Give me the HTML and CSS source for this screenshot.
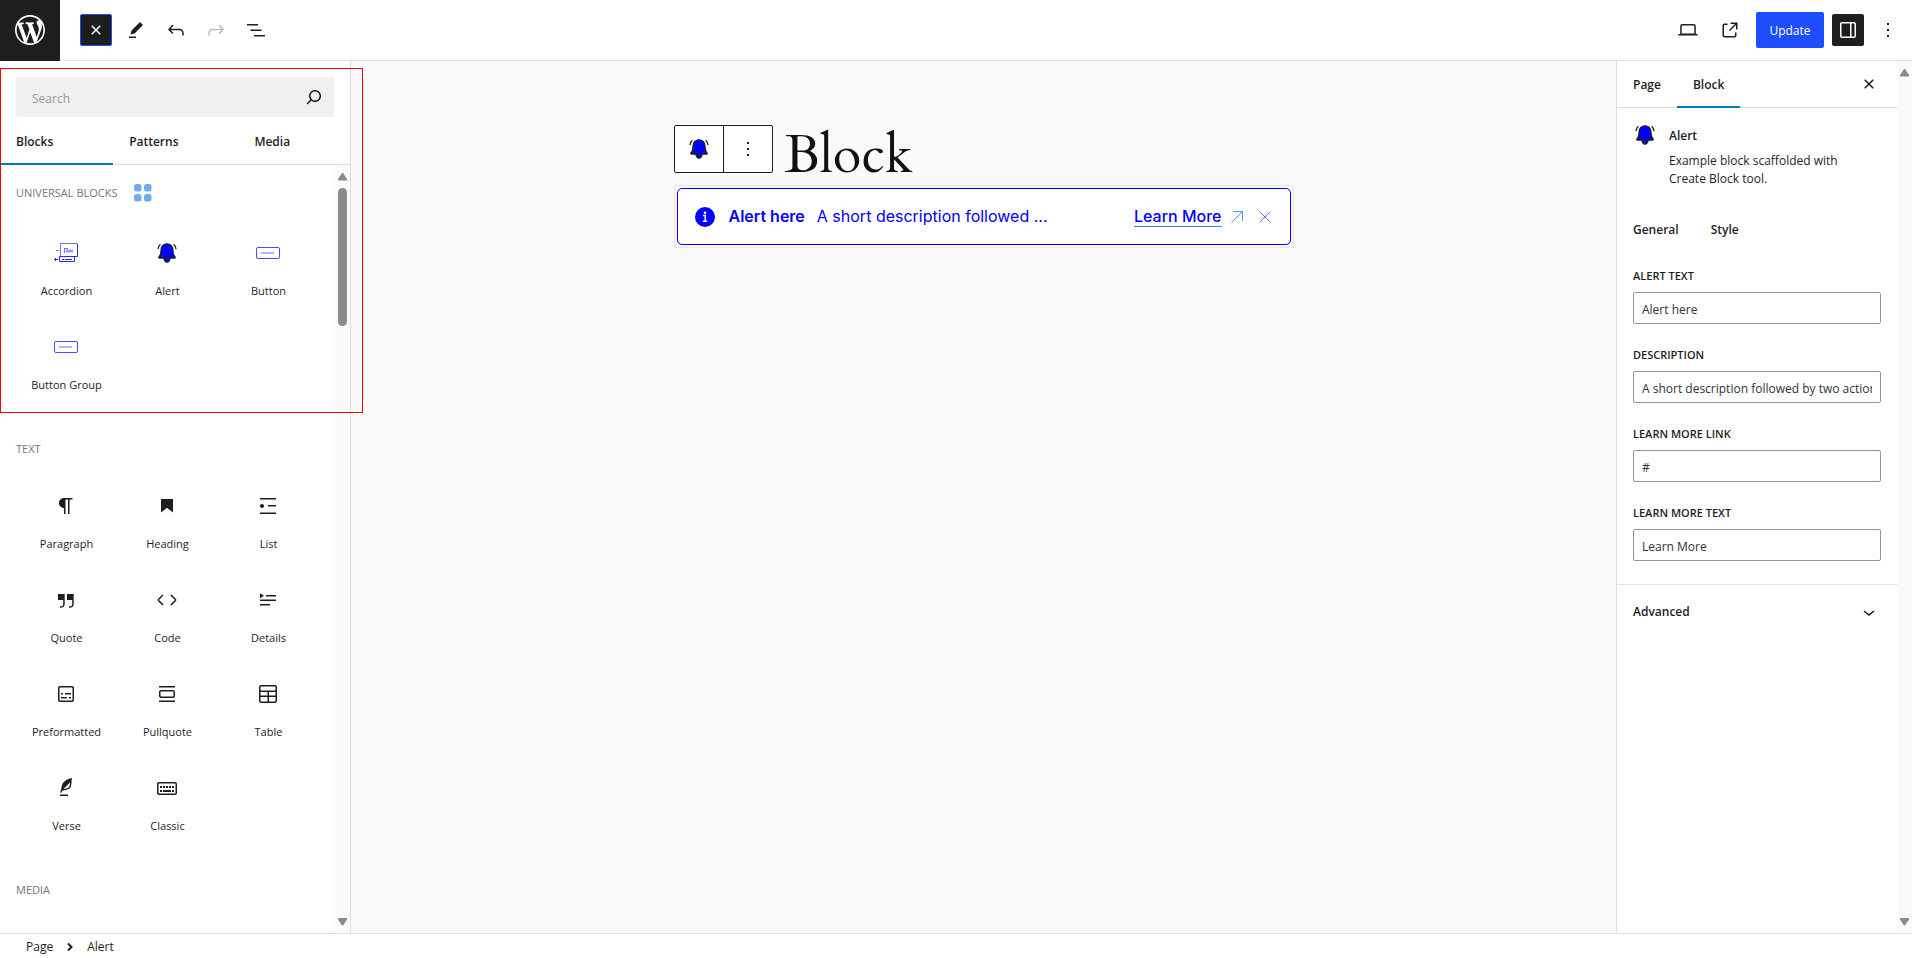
FILE: index.html
```html
<!DOCTYPE html>
<html lang="en">
<head>
<meta charset="utf-8">
<title>Edit Page</title>
<link rel="stylesheet" href="styles.css">
</head>
<body>
<svg class="sprite" aria-hidden="true">
  <symbol id="bell" viewBox="0 0 24 24">
    <path d="M12 2.800c-3.300 0-5.800 2.300-5.900 5.700-.1 3.600-.4 5.700-2 7.200-.4.500-.5 1.300.1 1.300h15.600c.6 0 .5-.8.1-1.300-1.600-1.500-1.900-3.600-2-7.200-.1-3.400-2.600-5.700-5.900-5.700z" fill="#0000ff" stroke="#1e1e1e" stroke-width="1.300"/>
    <path d="M9 17.300c.2 2.400 1.300 3.900 3 3.900s2.800-1.500 3-3.900z" fill="#0000ff" stroke="#1e1e1e" stroke-width="1.300"/>
    <path d="M5.400 3.300C4.200 4.300 3.300 6 3 8M18.600 3.300c1.200 1 2.100 2.700 2.400 4.700" fill="none" stroke="#1e1e1e" stroke-width="1.300"/>
  </symbol>
  <symbol id="close" viewBox="0 0 24 24"><path d="M12 13.060l3.712 3.713 1.061-1.060L13.061 12l3.712-3.712-1.060-1.060L12 10.938 8.288 7.227l-1.061 1.060L10.939 12l-3.712 3.712 1.060 1.061L12 13.061z"/></symbol>
  <symbol id="more" viewBox="0 0 24 24"><path d="M13 19h-2v-2h2v2zm0-6h-2v-2h2v2zm0-6h-2V5h2v2z"/></symbol>
  <symbol id="button-block" viewBox="0 0 24 24"><rect x="0.500" y="6.500" width="23" height="11" rx="1.500" fill="none" stroke="#4a4aff"/><path d="M5 12h13" stroke="#6a6aff"/></symbol>
</svg>

<header class="topbar">
  <a class="site-logo" href="#" aria-label="View pages"><svg viewBox="-2 -2 24 24"><path d="M20 10c0-5.510-4.490-10-10-10C4.480 0 0 4.490 0 10c0 5.520 4.480 10 10 10 5.510 0 10-4.480 10-10zM7.780 15.370L4.370 6.220c.55-.02 1.170-.08 1.170-.08.5-.06.44-1.130-.06-1.110 0 0-1.450.11-2.370.11-.18 0-.37 0-.58-.01C4.120 2.690 6.870 1.110 10 1.110c2.330 0 4.450.87 6.050 2.340-.68-.11-1.650.39-1.650 1.580 0 .74.45 1.360.9 2.100.35.61.55 1.360.55 2.460 0 1.490-1.400 5-1.400 5l-3.030-8.370c.54-.02.82-.17.82-.17.5-.05.44-1.250-.06-1.220 0 0-1.440.12-2.380.12-.87 0-2.330-.12-2.330-.12-.5-.03-.56 1.200-.06 1.220l.92.08 1.260 3.410zM17.410 10c.24-.64.74-1.870.43-4.250.7 1.290 1.050 2.710 1.050 4.250 0 3.290-1.730 6.240-4.400 7.780.97-2.590 1.940-5.200 2.920-7.780zM6.100 18.090C3.120 16.650 1.110 13.530 1.110 10c0-1.300.23-2.480.72-3.590C3.250 10.300 4.670 14.200 6.100 18.090zm4.030-6.630l2.580 6.980c-.86.29-1.760.45-2.710.45-.79 0-1.570-.11-2.290-.33.81-2.380 1.620-4.740 2.420-7.100z"/></svg></a>
  <div class="tools">
    <button class="icon-btn icon-btn--dark icon-btn--focus" aria-label="Close inserter"><svg><use href="#close"/></svg></button>
    <button class="icon-btn" aria-label="Tools"><svg viewBox="0 0 24 24"><path d="m19 7-3-3-8.500 8.500-1 4 4-1L19 7Zm-7 11.500H5V20h7v-1.500Z"/></svg></button>
    <button class="icon-btn" aria-label="Undo"><svg viewBox="0 0 24 24"><path d="M18.300 11.700c-.6-.6-1.400-.9-2.300-.9H6.700l2.900-3.300-1.100-1-4.500 5L8.500 16l1-1-2.700-2.700H16c.5 0 .9.2 1.300.5 1 1 1 3.400 1 4.500v.3h1.500v-.2c0-1.500 0-4.300-1.500-5.700z"/></svg></button>
    <button class="icon-btn" aria-label="Redo" disabled><svg viewBox="0 0 24 24"><path d="M15.600 6.500l-1.100 1 2.900 3.300H8c-.9 0-1.700.3-2.300.9-1.400 1.500-1.400 4.200-1.400 5.600v.2h1.500v-.3c0-1.100 0-3.500 1-4.500.3-.3.7-.5 1.300-.5h9.200L14.500 15l1.100 1.100 4.600-4.600-4.600-5z"/></svg></button>
    <button class="icon-btn" aria-label="Document overview"><svg viewBox="0 0 24 24"><path d="M3 6h11v1.500H3V6Zm3.500 5.500h11V13h-11v-1.500ZM21 17H10v1.500h11V17Z"/></svg></button>
  </div>
  <div class="actions">
    <div class="previews">
      <button class="icon-btn" aria-label="View"><svg viewBox="0 0 24 24"><path d="M20.500 16h-.7V8c0-1.100-.9-2-2-2H6.200c-1.100 0-2 .9-2 2v8h-.7c-.8 0-1.500.7-1.500 1.500h20c0-.8-.7-1.500-1.500-1.500zM5.700 8c0-.3.2-.5.5-.5h11.600c.3 0 .5.2.5.5v7.600H5.700V8z"/></svg></button>
      <button class="icon-btn" aria-label="View page"><svg viewBox="0 0 24 24"><path d="M19.500 4.500h-7V6h4.440l-5.970 5.970 1.060 1.060L18 7.060v4.440h1.500v-7Zm-13 1a2 2 0 0 0-2 2v10a2 2 0 0 0 2 2h10a2 2 0 0 0 2-2v-3H17v3a.5.5 0 0 1-.5.5h-10a.5.5 0 0 1-.5-.5v-10a.5.5 0 0 1 .5-.5h3V5.500h-3Z"/></svg></button>
    </div>
    <button class="update">Update</button>
    <button class="icon-btn icon-btn--dark" aria-label="Settings"><svg viewBox="0 0 24 24"><path d="M18 4H6c-1.100 0-2 .9-2 2v12c0 1.100.9 2 2 2h12c1.100 0 2-.9 2-2V6c0-1.100-.9-2-2-2zm-4 14.500H6c-.3 0-.5-.2-.5-.5V6c0-.3.2-.5.5-.5h8v13zm4.500-.5c0 .3-.2.5-.5.5h-2.500v-13H18c.3 0 .5.2.5.5v12z"/></svg></button>
    <button class="icon-btn" aria-label="Options"><svg><use href="#more"/></svg></button>
  </div>
</header>

<div class="workspace">
  <aside class="inserter">
    <div class="search">
      <input id="block-search" type="text" placeholder="Search" aria-label="Search">
      <svg viewBox="0 0 24 24"><path d="M13 5c-3.300 0-6 2.700-6 6 0 1.400.5 2.700 1.300 3.700l-3.800 3.800 1.100 1.100 3.800-3.800c1 .8 2.300 1.300 3.700 1.300 3.300 0 6-2.700 6-6S16.300 5 13 5zm0 10.500c-2.500 0-4.500-2-4.500-4.500s2-4.500 4.500-4.500 4.500 2 4.500 4.500-2 4.500-4.500 4.500z"/></svg>
    </div>
    <div class="tabs tabs--fill">
      <button class="tab tab--active">Blocks</button>
      <button class="tab">Patterns</button>
      <button class="tab">Media</button>
    </div>
    <div class="scroll-area">
      <div class="block-list">
        <section>
          <div class="category category--icon"><h2>Universal Blocks</h2><svg class="category-icon" viewBox="0 0 18 18" aria-hidden="true"><g fill="#72aee6"><rect width="7.500" height="7.500" rx="2.500"/><rect x="10" width="7.500" height="7.500" rx="2.500"/><rect y="10" width="7.500" height="7.500" rx="2.500"/><rect x="10" y="10" width="7.500" height="7.500" rx="2.500"/></g></svg></div>
          <div class="blocks">
            <button class="block"><svg viewBox="0 0 24 24"><g fill="none" stroke="#6f6fff"><path d="M6.500 15V2.500h17"/><path d="M2 9.500h3M10 7.500h4M10.500 8v4"/></g><path d="M12 8.500h7v3h-7z" fill="#9c9cff"/><path d="M23.500 3v12.500h-18v5h15v-5M8 18.500h2M11 18.500h7M0 18.500h4M1.500 17v3" fill="none" stroke="#2a2aff"/></svg>Accordion</button>
            <button class="block"><svg><use href="#bell"/></svg>Alert</button>
            <button class="block"><svg><use href="#button-block"/></svg>Button</button>
            <button class="block"><svg><use href="#button-block"/></svg>Button Group</button>
          </div>
        </section>
        <section>
          <div class="category"><h2>Text</h2></div>
          <div class="blocks">
            <button class="block"><svg viewBox="0 0 24 24"><path d="m9.996 14v-.225l.004 0v6.225h1.500v-14.500h2.500v14.500h1.500v-14.500h3v-1.500h-8.504c-2.761 0-5 2.239-5 5 0 2.761 2.239 5 5 5z"/></svg>Paragraph</button>
            <button class="block"><svg viewBox="0 0 24 24"><path d="M6 5V18.591L12 13.847L18 18.591V5H6Z"/></svg>Heading</button>
            <button class="block"><svg viewBox="0 0 24 24"><path d="M4 4v1.500h16V4H4zm8 8.500h8V11h-8v1.500zM4 20h16v-1.500H4V20zm4-8c0-1.100-.9-2-2-2s-2 .9-2 2 .9 2 2 2 2-.9 2-2z"/></svg>List</button>
            <button class="block"><svg viewBox="0 0 24 24"><path d="M13 6v6h5.200v4c0 .8-.2 1.400-.5 1.700-.6.6-1.600.6-2.500.5h-.3v1.500h.5c1 0 2.300-.1 3.300-1 .6-.6 1-1.600 1-2.800V6H13zm-9 6h5.200v4c0 .8-.2 1.400-.5 1.700-.6.6-1.600.6-2.500.5h-.3v1.500h.5c1 0 2.300-.1 3.300-1 .6-.6 1-1.600 1-2.800V6H4v6z"/></svg>Quote</button>
            <button class="block"><svg viewBox="0 0 24 24"><path d="M20.800 10.700l-4.300-4.300-1.100 1.100 4.300 4.300c.1.1.1.3 0 .4l-4.300 4.300 1.100 1.100 4.300-4.300c.7-.8.7-1.900 0-2.600zM4.200 11.800l4.300-4.300-1-1-4.300 4.300c-.7.7-.7 1.800 0 2.500l4.300 4.300 1.100-1.100-4.300-4.300c-.2-.1-.2-.3-.1-.4z"/></svg>Code</button>
            <button class="block"><svg viewBox="0 0 24 24"><path d="M4 16h10v1.500H4V16Zm0-4.500h16V13H4v-1.500ZM10 7h10v1.500H10V7Z"/><path d="m4 5.250 4 2.500-4 2.500v-5Z"/></svg>Details</button>
            <button class="block"><svg viewBox="0 0 24 24"><path d="M18 4H6c-1.100 0-2 .9-2 2v12c0 1.100.9 2 2 2h12c1.100 0 2-.9 2-2V6c0-1.100-.9-2-2-2zm.5 14c0 .3-.2.5-.5.5H6c-.3 0-.5-.2-.5-.5V6c0-.3.2-.5.5-.5h12c.3 0 .5.2.5.5v12zM7 16.500h6V15H7v1.500zm4-4h6V11h-6v1.500zM9 11H7v1.500h2V11zm6 5.500h2V15h-2v1.500z"/></svg>Preformatted</button>
            <button class="block"><svg viewBox="0 0 24 24"><path d="M18 8H6c-1.100 0-2 .9-2 2v4c0 1.100.9 2 2 2h12c1.100 0 2-.9 2-2v-4c0-1.100-.9-2-2-2zm.5 6c0 .3-.2.5-.5.5H6c-.3 0-.5-.2-.5-.5v-4c0-.3.2-.5.5-.5h12c.3 0 .5.2.5.5v4zM4 4v1.500h16V4H4zm0 16h16v-1.500H4V20z"/></svg>Pullquote</button>
            <button class="block"><svg viewBox="0 0 24 24"><path d="M19 3H5c-1.100 0-2 .9-2 2v14c0 1.100.9 2 2 2h14c1.100 0 2-.9 2-2V5c0-1.100-.9-2-2-2zM5 4.500h14c.3 0 .5.2.5.5v3.500h-15V5c0-.3.2-.5.5-.5zm8 5.500h6.500v3.500H13V10zm-1.500 3.500h-7V10h7v3.500zm-7 5.500v-4h7v4.500H5c-.3 0-.5-.2-.5-.5zm14.500.5h-6V15h6.500v4c0 .3-.2.5-.5.5z"/></svg>Table</button>
            <button class="block"><svg viewBox="0 0 24 24"><path d="M17.800 2l-.9.3c-.1 0-3.600 1-5.200 2.100C10 5.500 9.300 6.500 8.900 7.100c-.6.9-1.700 4.700-1.700 6.300l-.9 2.300c-.2.4 0 .8.4 1 .1 0 .2.1.3.1.3 0 .6-.2.7-.5l.6-1.500c.3 0 .7-.1 1.200-.2.7-.1 1.400-.3 2.200-.5.8-.2 1.600-.5 2.400-.8.7-.3 1.400-.7 1.900-1.200s.8-1.200 1-1.900c.2-.7.3-1.600.4-2.400.1-.8.1-1.700.2-2.500 0-.8.1-1.500.2-2.100V2zm-1.900 5.600c-.1.8-.2 1.500-.3 2.100-.2.6-.4 1-.6 1.300-.3.3-.8.6-1.400.9-.7.3-1.400.5-2.200.8-.6.2-1.300.3-1.800.4L15 7.500c.3-.3.6-.7 1-1.100 0 .4 0 .8-.1 1.200zM6 20h8v-1.500H6V20z"/></svg>Verse</button>
            <button class="block"><svg viewBox="0 0 24 24"><path d="M20 6H4c-1.100 0-2 .9-2 2v9c0 1.100.9 2 2 2h16c1.100 0 2-.9 2-2V8c0-1.100-.9-2-2-2zm.5 11c0 .3-.2.5-.5.5H4c-.3 0-.5-.2-.5-.5V8c0-.3.2-.5.5-.5h16c.3 0 .5.2.5.5v9zM10 10H8v2h2v-2zm-5 2h2v-2H5v2zm8-2h-2v2h2v-2zm-5 6h8v-2H8v2zm6-4h2v-2h-2v2zm3 0h2v-2h-2v2zm0 4h2v-2h-2v2zM5 16h2v-2H5v2z"/></svg>Classic</button>
          </div>
        </section>
        <section>
          <div class="category"><h2>Media</h2></div>
        </section>
      </div>
      <div class="scrollbar" aria-hidden="true">
        <svg viewBox="0 0 9 8"><path d="M4 0h1l4 6v1.500H0V6z"/></svg>
        <span class="thumb"></span>
        <svg class="scrollbar-end" viewBox="0 0 9 8"><path d="M4 7.500h1L9 1.500V0H0v1.500z"/></svg>
      </div>
    </div>
  </aside>
  <div class="highlight" aria-hidden="true"></div>

  <main class="canvas">
    <div class="content">
      <div class="title-row">
        <div class="block-toolbar">
          <button aria-label="Alert"><svg><use href="#bell"/></svg></button>
          <button aria-label="Options"><svg><use href="#more"/></svg></button>
        </div>
        <h1>Block</h1>
      </div>
      <div class="alert-frame">
        <div class="alert">
          <svg class="info" viewBox="0 0 20 20" aria-hidden="true"><circle cx="10" cy="10" r="10" fill="#0000ff"/><circle cx="10" cy="5.800" r="1.300" fill="#fff"/><path d="M8 8.500h2.200v5.500M8 14.300h4.200" fill="none" stroke="#fff" stroke-width="1.400"/></svg>
          <strong>Alert here</strong>
          <span>A short description followed ...</span>
          <a href="#">Learn More</a>
          <svg class="arrow" viewBox="0 0 12 12" aria-hidden="true"><path d="M0.500 11.500 11.500 0.500M2 0.500h9.500V10"/></svg>
          <button class="dismiss" aria-label="Dismiss"><svg viewBox="0 0 12 12"><path d="M0.500 0.500l11 11M11.500 0.500l-11 11"/></svg></button>
        </div>
      </div>
    </div>
  </main>

  <aside class="settings">
    <div class="panel">
      <div class="tabs">
        <button class="tab">Page</button>
        <button class="tab tab--active">Block</button>
        <button class="icon-btn close-panel" aria-label="Close settings"><svg><use href="#close"/></svg></button>
      </div>
      <div class="card">
        <svg><use href="#bell"/></svg>
        <div><h2>Alert</h2><p>Example block scaffolded with Create Block tool.</p></div>
      </div>
      <div class="tabs tabs--plain">
        <button class="tab">General</button>
        <button class="tab">Style</button>
      </div>
      <form class="fields">
        <div class="field"><label for="alert-text">Alert text</label><input id="alert-text" type="text" value="Alert here"></div>
        <div class="field"><label for="description">Description</label><input id="description" type="text" value="A short description followed by two actions"></div>
        <div class="field"><label for="link">Learn more link</label><input id="link" type="text" value="#"></div>
        <div class="field"><label for="link-text">Learn more text</label><input id="link-text" type="text" value="Learn More"></div>
      </form>
      <button class="advanced">Advanced<svg viewBox="0 0 24 24"><path d="M17.500 11.600L12 16l-5.500-4.400.9-1.200L12 14l4.500-3.600 1 1.200z"/></svg></button>
    </div>
    <div class="scrollbar" aria-hidden="true">
      <svg viewBox="0 0 9 8"><path d="M4 0h1l4 6v1.500H0V6z"/></svg>
      <svg class="scrollbar-end" viewBox="0 0 9 8"><path d="M4 7.500h1L9 1.500V0H0v1.500z"/></svg>
    </div>
  </aside>
</div>

<footer class="breadcrumb">
  <a href="#">Page</a>
  <svg viewBox="0 0 6 8" aria-hidden="true"><path d="M1 0.500 4.500 4 1 7.500"/></svg>
  <span>Alert</span>
</footer>
</body>
</html>
```
FILE: styles.css
```css
* { box-sizing: border-box; }

body {
  margin: 0;
  height: 100vh;
  display: flex;
  flex-direction: column;
  overflow: hidden;
  background: #fff;
  color: #1e1e1e;
  font: 12px/18px "Segoe UI", "Open Sans", "Noto Sans", sans-serif;
}

h1, h2, p { margin: 0; }

button {
  margin: 0;
  padding: 0;
  border: 0;
  background: none;
  color: inherit;
  font: inherit;
  cursor: pointer;
}

a { color: inherit; text-decoration: none; }

svg {
  display: block;
  flex: none;
  width: 24px;
  height: 24px;
  fill: currentColor;
}

.sprite { position: absolute; width: 0; height: 0; }

/* Top bar */
.topbar {
  flex: none;
  display: flex;
  align-items: center;
  height: 61px;
  border-bottom: 1px solid #e0e0e0;
}

.site-logo {
  display: flex;
  align-items: center;
  justify-content: center;
  width: 60px;
  height: 61px;
  background: #1e1e1e;
  color: #fff;
}

.site-logo svg { width: 36px; height: 36px; }

.tools { display: flex; gap: 8px; padding-left: 20px; }

.actions {
  display: flex;
  align-items: center;
  gap: 8px;
  margin-left: auto;
  padding-right: 8px;
}

.previews { display: flex; gap: 10px; padding-right: 2px; }

.icon-btn {
  display: flex;
  align-items: center;
  justify-content: center;
  width: 32px;
  height: 32px;
  border-radius: 2px;
}

.icon-btn:disabled { color: #bbb; }
.icon-btn--dark { background: #1e1e1e; color: #fff; }
.icon-btn--focus { border: 1px solid #1d4dff; }

.update {
  min-width: 68px;
  height: 36px;
  padding: 2px 12px 0;
  border-radius: 2px;
  background: #1d4dff;
  color: #fff;
}

/* Workspace */
.workspace {
  position: relative;
  flex: 1;
  min-height: 0;
  display: flex;
}

.tabs { flex: none; display: flex; height: 48px; border-bottom: 1px solid #ddd; }

.tab {
  position: relative;
  padding: 2px 16px 0;
  font-weight: 600;
  text-align: left;
}

.tabs--fill .tab { flex: 1 1 auto; }

.tab--active::after {
  content: "";
  position: absolute;
  left: 0;
  right: 0;
  bottom: -1px;
  height: 2px;
  background: #007cba;
}

.tabs--plain { border-bottom: 0; }

/* Inserter */
.inserter {
  flex: none;
  display: flex;
  flex-direction: column;
  width: 351px;
  border-right: 1px solid #ddd;
}

.search {
  flex: none;
  display: flex;
  align-items: center;
  height: 40px;
  margin: 16px 16px 0;
  padding-right: 8px;
  border-radius: 2px;
  background: #f0f0f0;
}

.search input {
  flex: 1;
  min-width: 0;
  padding: 3px 16px 0;
  border: 0;
  outline: 0;
  background: none;
  font: inherit;
}

.search input::placeholder { color: #949ba8; }

.scroll-area { flex: 1; min-height: 0; display: flex; }

.block-list { flex: 1; overflow: hidden; padding: 0 16px; }

.category { padding: 31px 0 17px; }
.category--icon { display: flex; align-items: center; gap: 16px; height: 56px; padding: 0; }
.category--icon h2 { padding-bottom: 2px; }
.category-icon { width: 18px; height: 18px; }

.category h2 {
  color: #757575;
  font-size: 11px;
  font-weight: 500;
  line-height: 17px;
  text-transform: uppercase;
}

.blocks { display: grid; grid-template-columns: repeat(3, 1fr); }

.block {
  display: flex;
  flex-direction: column;
  align-items: center;
  gap: 17px;
  height: 94px;
  padding-top: 20px;
  font-size: 11px;
}

.block svg { margin-right: 1px; }

.scrollbar {
  flex: none;
  display: flex;
  flex-direction: column;
  align-items: center;
  gap: 7px;
  width: 15px;
  padding: 8px 0 7px;
  background: #fafafa;
  color: #8b8b8b;
}

.scrollbar svg { width: 9px; height: 8px; }
.thumb { width: 9px; height: 138px; border-radius: 5px; background: #8b8b8b; }
.scrollbar .scrollbar-end { margin-top: auto; }

.highlight {
  position: absolute;
  top: 7px;
  left: 0;
  width: 363px;
  height: 345px;
  border: 1px solid #ff0000;
  pointer-events: none;
}

/* Canvas */
.canvas { flex: 1; min-width: 0; padding: 64px 24px; background: #f9f9f9; }

.content { max-width: 620px; margin: 0 auto; }

.title-row { display: flex; align-items: center; gap: 12px; height: 48px; }

.block-toolbar {
  display: flex;
  height: 48px;
  border: 1px solid #1e1e1e;
  border-radius: 2px;
  background: #fff;
}

.block-toolbar button {
  display: flex;
  align-items: center;
  justify-content: center;
  width: 48px;
}

.block-toolbar button + button { width: 49px; border-left: 1px solid #1e1e1e; }

h1 {
  padding-top: 14px;
  color: #111;
  font: 400 52px/52px "Cardo", "Liberation Serif", serif;
}

.alert-frame { margin-top: 12px; padding: 2px; border: 1px solid #e5e7eb; }

.alert {
  display: flex;
  align-items: center;
  height: 57px;
  padding: 0 19px 0 17px;
  border: 1px solid #0000ff;
  border-radius: 5px;
  background: #fff;
  color: #0000ff;
  font: 16px/24px Inter, sans-serif;
}

.info { width: 20px; height: 20px; margin-right: 14px; }
.alert strong, .alert span { padding-bottom: 1px; }
.alert strong { margin-right: 12px; font-weight: 600; }
.alert a { margin-left: auto; border-bottom: 1px solid #2f80ff; font-weight: 500; line-height: 20px; }
.arrow, .dismiss svg { width: 12px; height: 12px; fill: none; stroke: #4d94ff; }
.arrow { margin: 0 16px 0 9px; }
.dismiss svg { stroke: #7070ff; }

/* Settings */
.settings { flex: none; display: flex; width: 296px; border-left: 1px solid #ddd; }

.panel { flex: 1; min-width: 0; }

.panel > .tabs:first-child { height: 47px; }

.close-panel { margin: 7px 12px 0 auto; }

.card { display: flex; gap: 12px; padding: 15px 32px 17px 16px; }
.card h2 { padding: 3px 0 6px; font-size: 12px; font-weight: 600; line-height: 20px; }

.fields { display: grid; gap: 22px; padding: 14px 16px 23px; border-bottom: 1px solid #e0e0e0; }

.field { display: grid; gap: 7px; }

.field label { font-size: 11px; font-weight: 600; line-height: 18px; text-transform: uppercase; }

.field input {
  width: 100%;
  min-width: 0;
  height: 32px;
  padding: 2px 8px 0;
  border: 1px solid #949494;
  border-radius: 2px;
  background: #fff;
  color: #2c3338;
  font: inherit;
}

.advanced {
  display: flex;
  align-items: center;
  justify-content: space-between;
  width: 100%;
  height: 54px;
  padding: 0 16px;
  font-weight: 600;
}

/* Breadcrumb */
.breadcrumb {
  flex: none;
  display: flex;
  align-items: center;
  gap: 14px;
  height: 25px;
  padding: 2px 26px 0;
  border-top: 1px solid #e0e0e0;
}

.breadcrumb svg { width: 6px; height: 8px; fill: none; stroke: #1e1e1e; stroke-width: 2; }
```
